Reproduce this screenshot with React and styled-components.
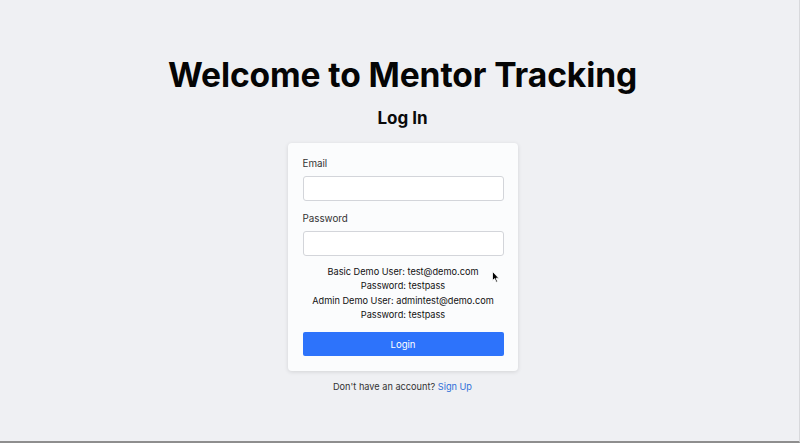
import React from "react";
import styled, { createGlobalStyle } from "styled-components";

const Global = createGlobalStyle`
  html, body { margin: 0; padding: 0; }
  body {
    background: #eff0f3;
    font-family: Inter, "Helvetica Neue", Arial, sans-serif;
    color: #111;
  }
`;

const Page = styled.div`
  box-sizing: border-box;
  width: 800px;
  height: 443px;
  display: flex;
  flex-direction: column;
  align-items: center;
  padding-top: 53px;
  padding-left: 6px;
  border-right: 1px solid #d8d9dc;
  border-bottom: 2px solid #8e8e8e;
  position: relative;
`;

const Title = styled.h1`
  margin: 0;
  font-size: 33.6px;
  font-weight: 700;
  letter-spacing: -0.1px;
  line-height: 44px;
  color: #050505;
`;

const Subtitle = styled.h2`
  margin: 9px 0 0;
  font-size: 17px;
  font-weight: 700;
  line-height: 24px;
  color: #0a0a0a;
`;

const Card = styled.form`
  box-sizing: border-box;
  width: 230px;
  margin-top: 13px;
  padding: 14px 14px 15px 15px;
  background: #fbfcfd;
  border-radius: 4px;
  box-shadow: 0 1px 4px rgba(0, 0, 0, 0.12);
  display: flex;
  flex-direction: column;
`;

const Field = styled.div`
  display: flex;
  flex-direction: column;
  margin-bottom: ${(p) => p.$gap}px;
`;

const Label = styled.label`
  font-size: 9.8px;
  line-height: 14px;
  color: #333;
  margin-bottom: 5px;
`;

const Input = styled.input`
  box-sizing: border-box;
  width: 100%;
  height: 25px;
  border: 1px solid #d3d5da;
  border-radius: 3px;
  background: #fff;
  outline: none;
`;

const Demo = styled.div`
  text-align: center;
  font-size: 9.2px;
  line-height: 14.3px;
  color: #111;
  margin-top: 9px;
`;

const Button = styled.button`
  margin-top: 10px;
  height: 24px;
  border: none;
  border-radius: 2px;
  background: #2d73fb;
  color: #fff;
  font-family: inherit;
  font-size: 9.6px;
`;

const Footer = styled.p`
  margin: 9px 0 0;
  font-size: 9.2px;
  line-height: 14px;
  color: #333;
`;

const Link = styled.a`
  color: #2d6fd8;
  text-decoration: none;
`;

const Cursor = styled.svg`
  position: absolute;
  left: 492px;
  top: 271px;
`;

export default function App() {
  return (
    <>
      <Global />
      <Page>
        <Title>Welcome to Mentor Tracking</Title>
        <Subtitle>Log In</Subtitle>
        <Card onSubmit={(e) => e.preventDefault()}>
          <Field $gap={11}>
            <Label>Email</Label>
            <Input type="email" />
          </Field>
          <Field $gap={0}>
            <Label>Password</Label>
            <Input type="password" />
          </Field>
          <Demo>
            <div>Basic Demo User: test@demo.com</div>
            <div>Password: testpass</div>
            <div>Admin Demo User: admintest@demo.com</div>
            <div>Password: testpass</div>
          </Demo>
          <Button type="submit">Login</Button>
        </Card>
        <Footer>
          Don't have an account? <Link href="#">Sign Up</Link>
        </Footer>
        <Cursor width="8" height="12" viewBox="0 0 8 12">
          <path d="M0.5 0.5 L0.5 9.5 L2.6 7.6 L4.2 11.2 L5.5 10.6 L4 7.2 L6.8 7.2 Z" fill="#000" stroke="#fff" strokeWidth="0.8" />
        </Cursor>
      </Page>
    </>
  );
}
